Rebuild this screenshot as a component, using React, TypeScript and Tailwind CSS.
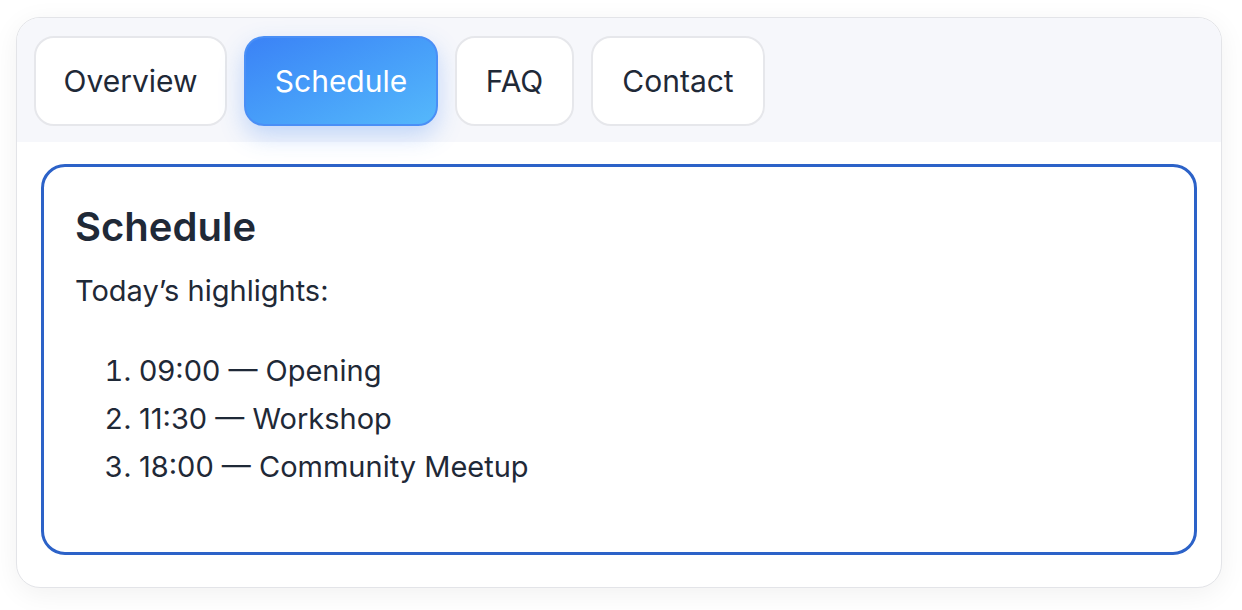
import React from "react";

const tabs = [
  { label: "Overview", w: "w-[193px]" },
  { label: "Schedule", w: "w-[194px]" },
  { label: "FAQ", w: "w-[119px]" },
  { label: "Contact", w: "w-[174px]" },
];

export default function App() {
  return (
    <div
      className="min-h-[610px] w-[1242px] bg-white pt-[17px] pl-4"
      style={{ fontFamily: "Inter, 'Noto Sans', sans-serif" }}
    >
      <div className="w-[1206px] h-[571px] rounded-[24px] border border-[#e3e4e8] bg-white shadow-[0_6px_28px_rgba(0,0,0,0.06)] overflow-hidden flex flex-col">
        <div className="flex gap-[17px] bg-[#f6f7fb] pt-[18px] pb-4 pl-[17px]">
          {tabs.map((t) =>
            t.label === "Schedule" ? (
              <button
                key={t.label}
                className={`${t.w} h-[90px] rounded-[20px] text-[30px] text-white bg-gradient-to-br from-[#3b82f6] to-[#55b8fb] shadow-[0_10px_24px_rgba(59,130,246,0.28)] border-2 border-[#4a8ff6]`}
              >
                {t.label}
              </button>
            ) : (
              <button
                key={t.label}
                className={`${t.w} h-[90px] rounded-[20px] text-[30px] text-[#1f2937] bg-white border-2 border-[#e6e7eb]`}
              >
                {t.label}
              </button>
            )
          )}
        </div>
        <div className="flex-1 pt-[22px] px-6 pb-[32px]">
          <div className="h-full rounded-[24px] border-[3px] border-[#2c62c8] pt-[36px] px-[31px] text-[#1f2937]">
            <h2 className="text-[40px] leading-[48px] font-semibold">Schedule</h2>
            <p className="mt-4 text-[29px] leading-[48px]">Today’s highlights:</p>
            <ol className="mt-8 list-decimal pl-[64px] text-[29px] leading-[48px]">
              <li>09:00 — Opening</li>
              <li>11:30 — Workshop</li>
              <li>18:00 — Community Meetup</li>
            </ol>
          </div>
        </div>
      </div>
    </div>
  );
}
